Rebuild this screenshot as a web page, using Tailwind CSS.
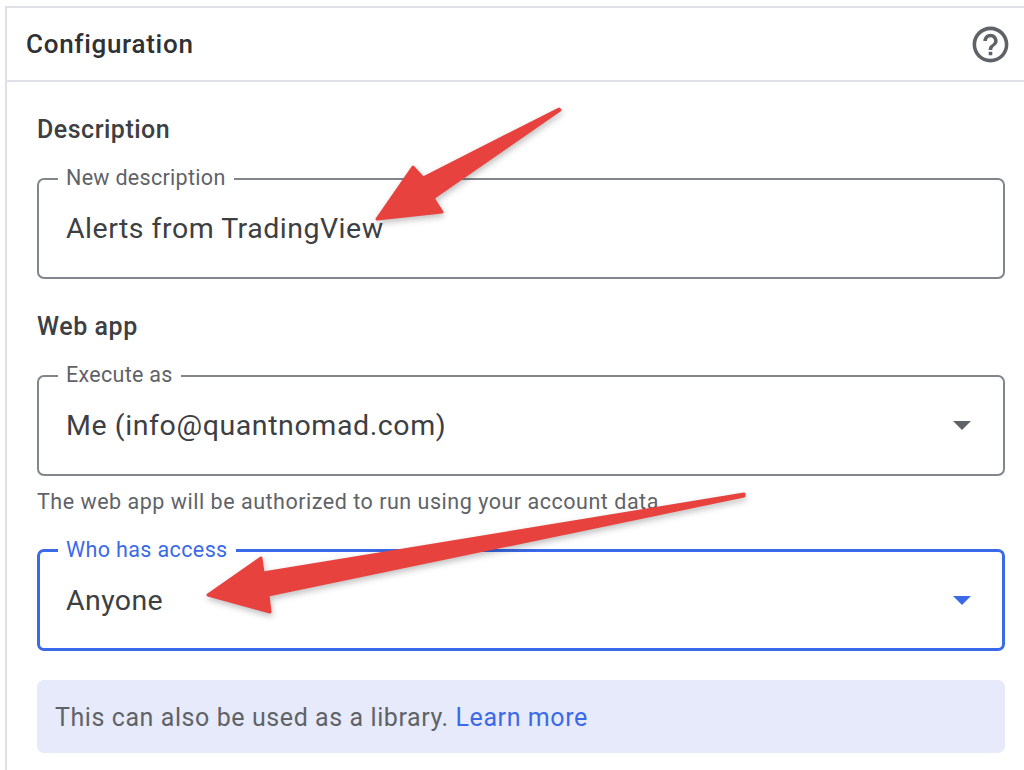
<!DOCTYPE html>
<html lang="en">
<head>
    <meta charset="UTF-8">
    <title>Configuration</title>
    <script src="https://cdn.jsdelivr.net/npm/@tailwindcss/browser@4"></script>
</head>
<body class="bg-white font-['Roboto',sans-serif] text-[#3c4043]">
    <div class="relative w-[1024px] h-[770px] overflow-hidden">
        <div class="mt-[6px] ml-[5px] h-[764px] border-t-2 border-l-2 border-[#e0e0e8]">
            <!-- Header -->
            <div class="flex items-center justify-between h-[74px] pl-[19px] pr-[12px] border-b-2 border-[#e0e0e8]">
                <h1 class="text-[26px] font-medium tracking-[0.7px] text-[#2f3134]">Configuration</h1>
                <svg class="w-[43px] h-[43px]" viewBox="0 0 24 24" fill="#5f6368">
                    <path d="M11 18h2v-2h-2v2zm1-16C6.48 2 2 6.48 2 12s4.48 10 10 10 10-4.48 10-10S17.52 2 12 2zm0 18c-4.41 0-8-3.59-8-8s3.59-8 8-8 8 3.59 8 8-3.59 8-8 8zm0-14c-2.21 0-4 1.79-4 4h2c0-1.1.9-2 2-2s2 .9 2 2c0 2-3 1.75-3 5h2c0-2.25 3-2.5 3-5 0-2.21-1.79-4-4-4z"/>
                </svg>
            </div>

            <div class="pl-[30px] w-[998px]">
                <!-- Description -->
                <h2 class="mt-[33px] h-[30px] leading-[30px] text-[25px] font-medium tracking-[0.5px]">Description</h2>
                <div class="relative mt-[33px] h-[101px] flex items-center px-[27px] border-2 border-[#80868b] rounded-[7px]">
                    <span class="absolute -top-[14px] left-[19px] px-[8px] bg-white text-[21.5px] leading-[24px] tracking-[0.3px] text-[#5f6368]">New description</span>
                    <span class="pt-[2px] text-[28.5px] tracking-[0.5px]">Alerts from TradingView</span>
                </div>

                <!-- Web app -->
                <h2 class="mt-[33px] h-[30px] leading-[30px] text-[25px] font-medium tracking-[0.57px]">Web app</h2>
                <div class="relative mt-[33px] h-[101px] flex items-center justify-between pl-[27px] pr-[32px] border-2 border-[#80868b] rounded-[7px]">
                    <span class="absolute -top-[14px] left-[19px] px-[8px] bg-white text-[21.5px] leading-[24px] tracking-[0.3px] text-[#5f6368]">Execute as</span>
                    <span class="pt-[2px] text-[28.5px] tracking-[0.6px]">Me (info@quantnomad.com)</span>
                    <svg class="w-[18px] h-[9px]" viewBox="0 0 18 9" fill="#5f6368"><path d="M0 0h18L9 9z"/></svg>
                </div>
                <p class="mt-[13px] h-[26px] leading-[26px] text-[21.5px] tracking-[0.52px] text-[#5f6368]">The web app will be authorized to run using your account data</p>

                <!-- Who has access, focused -->
                <div class="relative mt-[34px] h-[102px] flex items-center justify-between pl-[26px] pr-[31px] border-[3px] border-[#3b6ae8] rounded-[7px]">
                    <span class="absolute -top-[14px] left-[18px] px-[8px] bg-white text-[21.5px] leading-[24px] tracking-[0.38px] text-[#3b6ae8]">Who has access</span>
                    <span class="pt-[3px] text-[28.5px] tracking-[0.4px]">Anyone</span>
                    <svg class="w-[18px] h-[9px]" viewBox="0 0 18 9" fill="#3b6ae8"><path d="M0 0h18L9 9z"/></svg>
                </div>

                <!-- Library note -->
                <div class="mt-[29px] h-[73px] flex items-center px-[18px] pt-[2px] rounded-[7px] bg-[#e6eafb] text-[25px] tracking-[0.58px] text-[#5f6368]">
                    <span>This can also be used as a library. <a class="text-[#3b6ae8]">Learn more</a></span>
                </div>
            </div>
        </div>

        <!-- Annotation arrows drawn over the screenshot -->
        <svg class="absolute inset-0 w-[1024px] h-[770px] pointer-events-none drop-shadow-[1px_3px_3px_rgba(0,0,0,0.25)]" viewBox="0 0 1024 770" fill="#e8423f" stroke="#e8423f" stroke-width="3" stroke-linejoin="round">
            <polygon points="559,109 423,178 413,167 377,219 442,212 433,198 560,110"/>
            <polygon points="744,494 263,573 261,558 208,595 270,612 268,595 744,496"/>
        </svg>
    </div>
</body>
</html>
